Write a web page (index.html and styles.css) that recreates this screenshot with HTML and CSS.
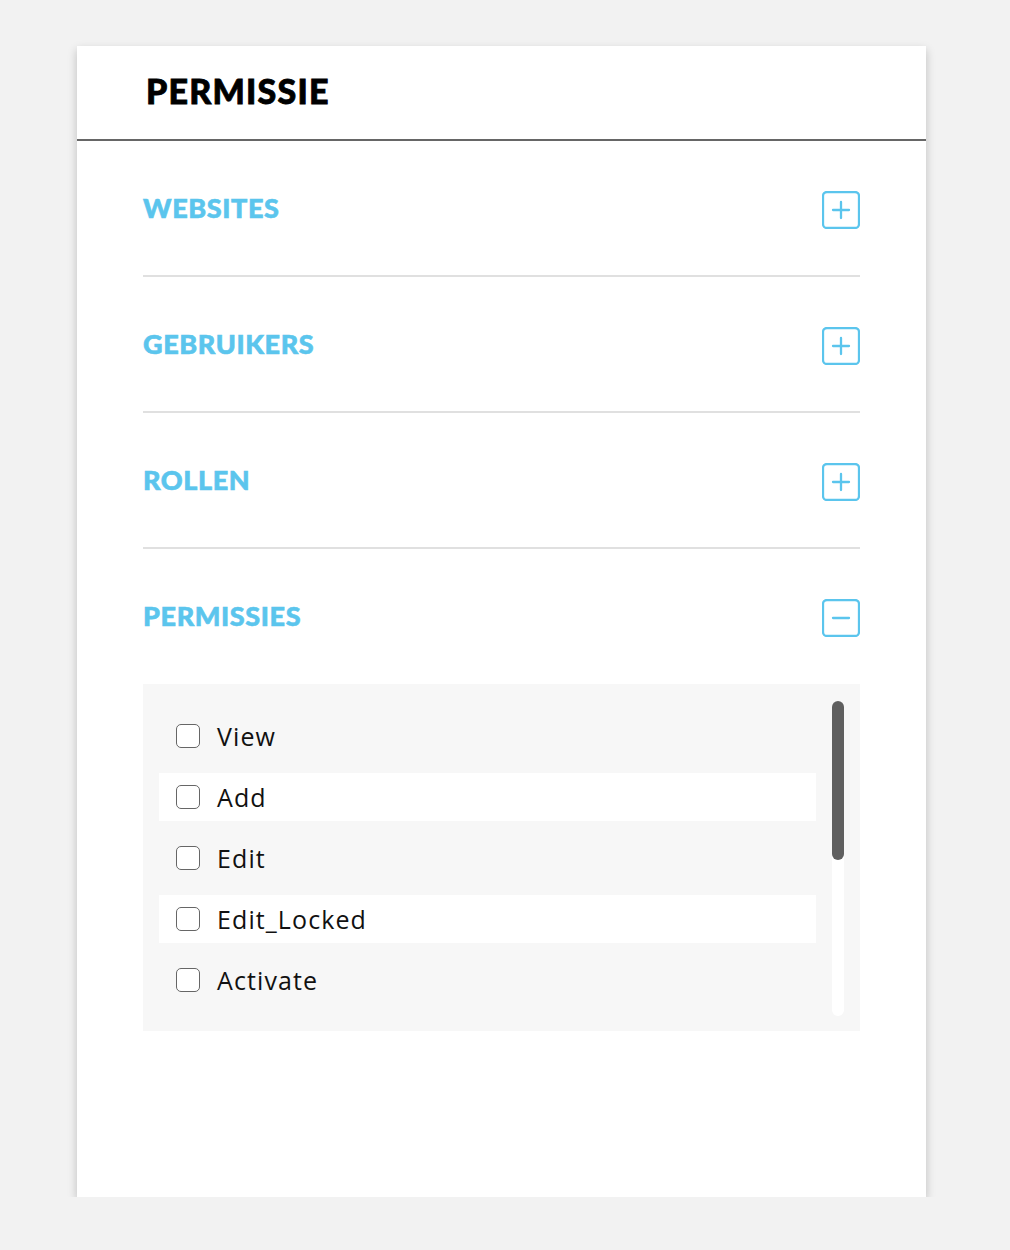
FILE: index.html
```html
<!DOCTYPE html>
<html>
<head>
<meta charset="utf-8">
<link rel="stylesheet" href="styles.css">
</head>
<body>
<div class="card">
  <div class="card-header"><h1 class="card-title">PERMISSIE</h1></div>
  <div class="card-body">
    <div class="section">
      <div class="section-head">
        <span class="section-title">WEBSITES</span>
        <svg class="toggle" viewBox="0 0 38 38"><rect x="1" y="1" width="36" height="36" rx="4" ry="4"/><path d="M19 11v16M11 19h16"/></svg>
      </div>
    </div>
    <div class="section">
      <div class="section-head">
        <span class="section-title">GEBRUIKERS</span>
        <svg class="toggle" viewBox="0 0 38 38"><rect x="1" y="1" width="36" height="36" rx="4" ry="4"/><path d="M19 11v16M11 19h16"/></svg>
      </div>
    </div>
    <div class="section">
      <div class="section-head">
        <span class="section-title">ROLLEN</span>
        <svg class="toggle" viewBox="0 0 38 38"><rect x="1" y="1" width="36" height="36" rx="4" ry="4"/><path d="M19 11v16M11 19h16"/></svg>
      </div>
    </div>
    <div class="section open">
      <div class="section-head">
        <span class="section-title">PERMISSIES</span>
        <svg class="toggle" viewBox="0 0 38 38"><rect x="1" y="1" width="36" height="36" rx="4" ry="4"/><path d="M11 19h16"/></svg>
      </div>
      <div class="perm-box">
        <ul class="perm-list">
          <li class="perm-row"><span class="check"></span><span class="perm-label">View</span></li>
          <li class="perm-row alt"><span class="check"></span><span class="perm-label">Add</span></li>
          <li class="perm-row"><span class="check"></span><span class="perm-label">Edit</span></li>
          <li class="perm-row alt"><span class="check"></span><span class="perm-label">Edit_Locked</span></li>
          <li class="perm-row"><span class="check"></span><span class="perm-label">Activate</span></li>
        </ul>
        <div class="scroll-track"><div class="scroll-thumb"></div></div>
      </div>
    </div>
  </div>
</div>
</body>
</html>
```

FILE: styles.css
```css
html, body {
  margin: 0;
  padding: 0;
  background: #f2f2f2;
}
body {
  padding: 46px 0 0 77px;
  font-family: "Lato", "Liberation Sans", sans-serif;
}
.card {
  width: 849px;
  height: 1151px;
  background: #fff;
  box-shadow: 0 4px 9px rgba(0, 0, 0, 0.22);
  box-sizing: border-box;
}
.card-header {
  height: 95px;
  box-sizing: border-box;
  border-bottom: 2px solid #666;
  padding-left: 69px;
  display: flex;
  align-items: center;
}
.card-title {
  margin: 0;
  font-family: "Lato", sans-serif;
  font-weight: 900;
  font-size: 34px;
  letter-spacing: 1.2px;
  color: #000;
  line-height: 1;
  padding-bottom: 4px;
  -webkit-text-stroke: 0.8px #000;
}
.card-body {
  padding: 0 66px;
}
.section {
  padding: 50px 0 47px;
  border-bottom: 2px solid #e0e0e0;
}
.section.open {
  border-bottom: none;
}
.section-head {
  display: flex;
  justify-content: space-between;
  align-items: center;
  height: 37px;
}
.section-title {
  font-family: "Lato", sans-serif;
  font-weight: 900;
  font-size: 27px;
  letter-spacing: 0.6px;
  color: #5bc5ed;
  line-height: 1;
  padding-bottom: 4px;
  -webkit-text-stroke: 0.6px #5bc5ed;
}
.toggle {
  width: 38px;
  height: 38px;
  fill: none;
  stroke: #5bc5ed;
  stroke-width: 2.3;
  stroke-linecap: round;
  margin-right: 0;
}
.perm-box {
  margin-top: 48px;
  background: #f7f7f7;
  height: 347px;
  box-sizing: border-box;
  padding: 17px 16px 16px;
  display: flex;
  gap: 16px;
}
.perm-list {
  list-style: none;
  margin: 0;
  padding: 11px 0 0;
  flex: 1;
  display: flex;
  flex-direction: column;
  gap: 13px;
}
.perm-row {
  height: 48px;
  display: flex;
  align-items: center;
  padding-left: 17px;
  gap: 17px;
}
.perm-row.alt {
  background: #fff;
}
.check {
  width: 24px;
  height: 24px;
  box-sizing: border-box;
  border: 1.6px solid #666;
  border-radius: 5px;
  background: #fff;
  flex: none;
}
.perm-label {
  font-family: "Open Sans", sans-serif;
  font-weight: 400;
  font-size: 25px;
  color: #111;
  letter-spacing: 1.1px;
}
.scroll-track {
  width: 12px;
  height: 315px;
  background: #fff;
  border-radius: 6px;
  flex: none;
}
.scroll-thumb {
  width: 12px;
  height: 159px;
  background: #5f5f5f;
  border-radius: 6px;
}
```
